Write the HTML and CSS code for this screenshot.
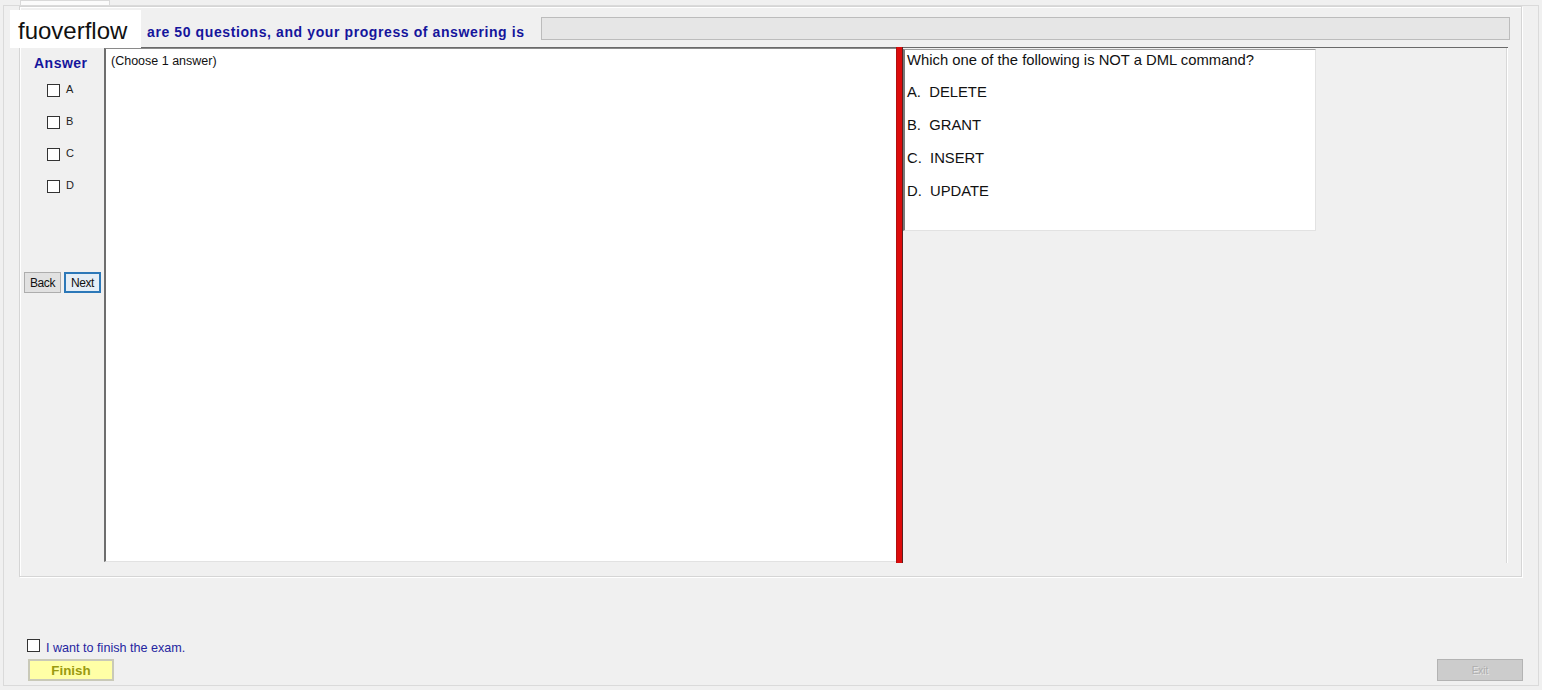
FILE: index.html
```html
<!DOCTYPE html>
<html>
<head>
<meta charset="utf-8">
<link rel="stylesheet" href="styles.css">
</head>
<body>
<div class="window">
  <div class="tabstrip"><div class="tab"></div></div>
  <div class="tabpage">
    <div class="group">
      <div class="header">
        <div class="title">are 50 questions, and your progress of answering is</div>
        <div class="progress"></div>
      </div>
      <div class="main">
        <div class="answers">
          <div class="answer-label">Answer</div>
          <div class="opt"><span class="box"></span><span class="opt-text">A</span></div>
          <div class="opt"><span class="box"></span><span class="opt-text">B</span></div>
          <div class="opt"><span class="box"></span><span class="opt-text">C</span></div>
          <div class="opt"><span class="box"></span><span class="opt-text">D</span></div>
          <div class="navs">
            <button class="btn back">Back</button>
            <button class="btn next">Next</button>
          </div>
        </div>
        <div class="split">
          <div class="content">(Choose 1 answer)</div>
          <div class="splitter"></div>
          <div class="right">
            <div class="qbox">
              <div class="question">Which one of the following is NOT a DML command?</div>
              <div class="choices">
                <div class="choice">A.&nbsp; DELETE</div>
                <div class="choice">B.&nbsp; GRANT</div>
                <div class="choice">C.&nbsp; INSERT</div>
                <div class="choice">D.&nbsp; UPDATE</div>
              </div>
            </div>
          </div>
        </div>
      </div>
    </div>
    <div class="footer">
      <div class="finish-area">
        <div class="confirm"><span class="box big"></span><span class="confirm-text">I want to finish the exam.</span></div>
        <button class="finish">Finish</button>
      </div>
      <button class="exit">Exit</button>
    </div>
  </div>
</div>
<div class="watermark">fuoverflow</div>
</body>
</html>
```
FILE: styles.css
```css
html, body {
  margin: 0;
  padding: 0;
}
body {
  width: 1542px;
  height: 690px;
  background: #f0f0f0;
  font-family: "Liberation Sans", Arial, sans-serif;
  position: relative;
  overflow: hidden;
}
.window {
  height: 690px;
  box-sizing: border-box;
  padding: 0 3px 4px 3px;
  display: flex;
  flex-direction: column;
}
.tabstrip {
  height: 5px;
  padding-left: 17px;
}
.tab {
  width: 90px;
  height: 5px;
  box-sizing: border-box;
  border: 1px solid #d9d9d9;
  border-bottom: none;
  background: #fbfbfb;
}
.tabpage {
  flex: 1;
  border: 1px solid #dadada;
  background: #f0f0f0;
  display: flex;
  flex-direction: column;
  padding: 0 16px 0 15px;
}
.group {
  height: 571px;
  box-sizing: border-box;
  border: 1px solid #d5d5d5;
  box-shadow: inset 1px 1px 0 #ffffff, 1px 1px 0 #ffffff;
  display: flex;
  flex-direction: column;
}
.header {
  height: 40px;
  box-sizing: border-box;
  padding: 10px 11px 0 127px;
  display: flex;
  align-items: flex-start;
}
.title {
  margin-top: 7px;
  font-size: 14px;
  letter-spacing: 0.6px;
  font-weight: bold;
  color: #15159c;
  line-height: 16px;
  white-space: nowrap;
}
.progress {
  flex: 1;
  margin-left: 16px;
  height: 23px;
  box-sizing: border-box;
  background: #e6e6e6;
  border: 1px solid #bcbcbc;
}
.main {
  height: 516px;
  margin: 0 13px 0 4px;
  display: flex;
}
.answers {
  width: 80px;
  display: flex;
  flex-direction: column;
}
.answer-label {
  margin: 8px 0 0 10px;
  font-size: 14px;
  letter-spacing: 0.5px;
  font-weight: bold;
  color: #15159c;
  line-height: 16px;
  height: 19px;
}
.opt {
  height: 32px;
  display: flex;
  align-items: center;
  padding-left: 23px;
}
.box {
  width: 13px;
  height: 13px;
  box-sizing: border-box;
  border: 1px solid #333333;
  background: #ffffff;
  display: inline-block;
}
.opt-text {
  margin-left: 6px;
  font-size: 11px;
  color: #222222;
  position: relative;
  top: -1px;
}
.navs {
  margin-top: 70px;
  display: flex;
  gap: 3px;
}
.btn {
  width: 37px;
  height: 21px;
  box-sizing: border-box;
  padding: 0;
  font-family: "Liberation Sans", Arial, sans-serif;
  font-size: 12px;
  color: #111111;
  letter-spacing: -0.4px;
}
.back {
  border: 1px solid #adadad;
  background: #e1e1e1;
}
.next {
  border: 2px solid #2c78b8;
  background: #e5eef6;
}
.split {
  flex: 1;
  display: flex;
  border-top: 1px solid #6a6a6a;
}
.content {
  width: 792px;
  height: 514px;
  box-sizing: border-box;
  background: #ffffff;
  border-left: 2px solid #6e6e6e;
  border-top: 1px solid #8a8a8a;
  border-bottom: 1px solid #e2e2e2;
  padding: 5px 0 0 5px;
  font-size: 12.5px;
  line-height: 14px;
  color: #111111;
}
.splitter {
  width: 7px;
  height: 516px;
  margin-top: -1px;
  box-sizing: border-box;
  background: #dd0b0b;
  border-left: 1px solid #b01010;
  border-right: 1px solid #5a2020;
}
.right {
  flex: 1;
  background: #f0f0f0;
  border-right: 1px solid #ffffff;
  box-shadow: inset -1px 0 0 #d8d8d8;
  padding-top: 1px;
}
.qbox {
  width: 413px;
  height: 182px;
  box-sizing: border-box;
  background: #ffffff;
  border-left: 2px solid #7a7a7a;
  border-top: 1px solid #a0a0a0;
  border-right: 1px solid #e2e2e2;
  border-bottom: 1px solid #e2e2e2;
  padding: 1px 0 0 2px;
  font-size: 14.8px;
  color: #111111;
}
.question {
  line-height: 18px;
}
.choices {
  margin-top: 7px;
}
.choice {
  line-height: 33px;
}
.footer {
  flex: 1;
  display: flex;
  align-items: flex-end;
  justify-content: space-between;
  padding-bottom: 4px;
}
.finish-area {
  display: flex;
  flex-direction: column;
  margin-left: 8px;
}
.confirm {
  display: flex;
  align-items: center;
  height: 14px;
}
.box.big {
  width: 13px;
  height: 13px;
}
.confirm-text {
  margin-left: 6px;
  font-size: 12.6px;
  color: #2525a0;
  position: relative;
  top: 3px;
}
.finish {
  margin: 7px 0 0 1px;
  width: 86px;
  height: 22px;
  box-sizing: border-box;
  background: #ffffa6;
  border: 2px solid #c9c9b8;
  font-family: "Liberation Sans", Arial, sans-serif;
  font-weight: bold;
  font-size: 13.4px;
  color: #9a9a10;
  padding: 0;
}
.exit {
  margin-right: -1px;
  width: 86px;
  height: 22px;
  box-sizing: border-box;
  background: #cccccc;
  border: 1px solid #b3b3b3;
  font-family: "Liberation Sans", Arial, sans-serif;
  font-size: 10px;
  color: #aeaeae;
  text-shadow: 1px 1px 0 #e6e6e6;
  padding: 0;
}
.watermark {
  position: absolute;
  left: 10px;
  top: 10px;
  width: 131px;
  height: 38px;
  box-sizing: border-box;
  padding-left: 8px;
  background: #ffffff;
  font-size: 24px;
  line-height: 42px;
  color: #111111;
}
```
